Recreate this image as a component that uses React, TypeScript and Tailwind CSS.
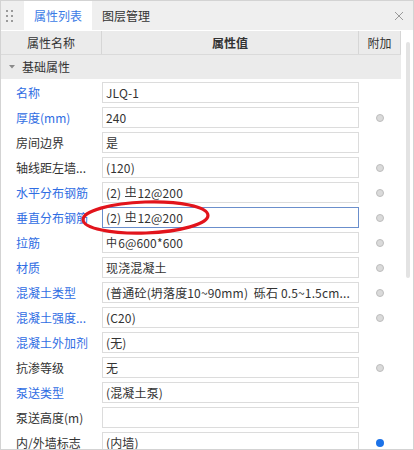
import React from 'react';

type Row = {
  label: string;
  blue?: boolean;
  value: React.ReactNode;
  dot?: 'gray' | 'blue';
  focus?: boolean;
};

// 钢筋级别符号（HPB300 / HRB400）
const Hpb = () => <span className="inline-block text-[11px] leading-none mr-[1px]">中</span>;
const Hrb = () => (
  <span className="inline-block text-[11px] leading-[10px] border-b border-[#444] ml-[4px] mr-[1px] -translate-y-[1px]">中</span>
);

const rows: Row[] = [
  { label: '名称', blue: true, value: 'JLQ-1' },
  { label: '厚度(mm)', blue: true, value: '240', dot: 'gray' },
  { label: '房间边界', value: '是' },
  { label: '轴线距左墙...', value: '(120)', dot: 'gray' },
  { label: '水平分布钢筋', blue: true, value: <>(2)<Hrb />12@200</>, dot: 'gray' },
  { label: '垂直分布钢筋', blue: true, value: <>(2)<Hrb />12@200</>, dot: 'gray', focus: true },
  { label: '拉筋', blue: true, value: <><Hpb />6@600*600</>, dot: 'gray' },
  { label: '材质', blue: true, value: '现浇混凝土', dot: 'gray' },
  { label: '混凝土类型', blue: true, value: '(普通砼(坍落度10~90mm)  砾石 0.5~1.5cm...', dot: 'gray' },
  { label: '混凝土强度...', blue: true, value: '(C20)', dot: 'gray' },
  { label: '混凝土外加剂', blue: true, value: '(无)' },
  { label: '抗渗等级', value: '无', dot: 'gray' },
  { label: '泵送类型', blue: true, value: '(混凝土泵)' },
  { label: '泵送高度(m)', value: '' },
  { label: '内/外墙标志', value: '(内墙)', dot: 'blue' },
];

export default function App() {
  return (
    <div className="relative w-[414px] h-[450px] overflow-hidden bg-white border border-[#d3d3d3] text-[12px] text-[#333] font-['Microsoft_YaHei','Noto_Sans_CJK_SC',sans-serif]">
      {/* 标签栏 */}
      <div className="flex h-[29px] bg-[#efefef] items-stretch">
        <div className="w-[23px] flex items-center pl-[5px]">
          <div className="grid grid-cols-2 gap-x-[3px] gap-y-[3px]">
            {Array.from({ length: 6 }).map((_, i) => (
              <div key={i} className="w-[2px] h-[2px] bg-[#9a9a9a]" />
            ))}
          </div>
        </div>
        <div className="w-[68px] bg-white text-[#3b7be6] flex items-center justify-center">属性列表</div>
        <div className="pl-[10px] flex items-center">图层管理</div>
        <div className="ml-auto pr-[10px] flex items-center">
          <svg width="8" height="8" viewBox="0 0 8 8" stroke="#9a9a9a" strokeWidth="1">
            <line x1="0" y1="0" x2="8" y2="8" />
            <line x1="8" y1="0" x2="0" y2="8" />
          </svg>
        </div>
      </div>
      <div className="h-[1px] bg-white" />

      <div className="flex">
        {/* 表格 */}
        <div className="w-[400px]">
          <div className="grid grid-cols-[101px_257px_42px] h-[24px] bg-[#ebebeb] border-b border-[#dadada]">
            <div className="flex items-center justify-center border-r border-[#d6d6d6]">属性名称</div>
            <div className="flex items-center justify-center border-r border-[#d6d6d6] font-bold">属性值</div>
            <div className="flex items-center justify-center border-r border-[#d6d6d6]">附加</div>
          </div>
          <div className="h-[24px] bg-[#ebebeb] flex items-center">
            <svg width="6" height="4" viewBox="0 0 6 4" className="ml-[8px] mr-[7px]">
              <path d="M0 0 L6 0 L3 3.5 Z" fill="#8a8a8a" />
            </svg>
            <span>基础属性</span>
          </div>
          {rows.map((r, i) => (
            <div key={i} className="flex h-[25px] pt-[3px]">
              <div
                className={`w-[101px] h-[21px] pl-[15px] flex items-center whitespace-nowrap overflow-hidden ${
                  r.blue ? 'text-[#2f6de3]' : 'text-[#333]'
                }`}
              >
                {r.label}
              </div>
              <div
                className={`w-[257px] h-[21px] px-[3px] flex items-center whitespace-pre overflow-hidden border tracking-[0.15px] ${
                  r.focus ? 'border-[#6b8fcc]' : 'border-[#dcdcdc]'
                }`}
              >
                {r.value}
              </div>
              <div className="w-[42px] h-[21px] flex items-center justify-center">
                {r.dot === 'gray' && (
                  <div className="w-[8px] h-[8px] rounded-full bg-[#dadada] border border-[#bdbdbd]" />
                )}
                {r.dot === 'blue' && <div className="w-[8px] h-[8px] rounded-full bg-[#1b72e8]" />}
              </div>
            </div>
          ))}
        </div>
        {/* 滚动条 */}
        <div className="w-[12px]">
          <div className="ml-[5px] mt-[11px] w-[4px] h-[236px] rounded-full bg-[#e3e3e3]" />
        </div>
      </div>

      {/* 红色圈注 */}
      <svg className="absolute left-0 top-0 pointer-events-none" width="414" height="450">
        <ellipse
          cx="144.5"
          cy="216.5"
          rx="62.5"
          ry="15.5"
          fill="none"
          stroke="#e2141c"
          strokeWidth="3.2"
          transform="rotate(-2 144.5 216.5)"
        />
      </svg>
    </div>
  );
}
